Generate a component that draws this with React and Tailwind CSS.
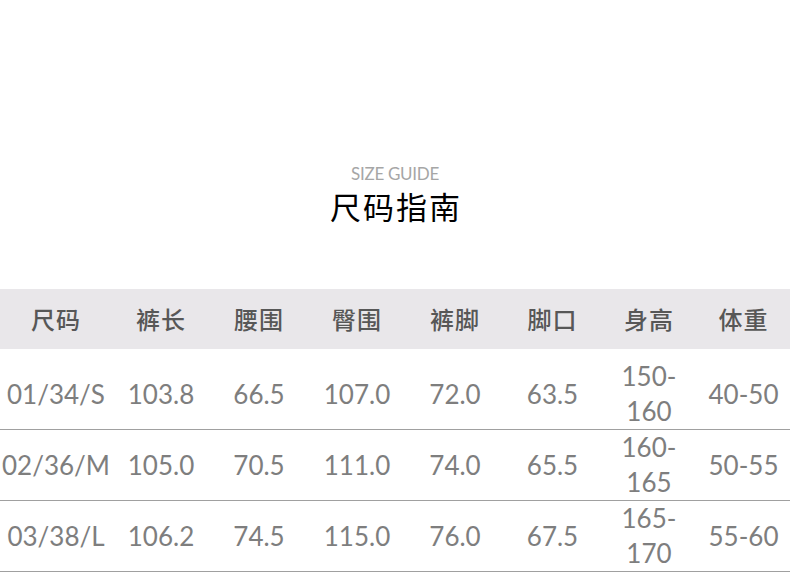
const COLS = ['尺码', '裤长', '腰围', '臀围', '裤脚', '脚口', '身高', '体重']

const ROWS = [
  ['01/34/S', '103.8', '66.5', '107.0', '72.0', '63.5', '150-160', '40-50'],
  ['02/36/M', '105.0', '70.5', '111.0', '74.0', '65.5', '160-165', '50-55'],
  ['03/38/L', '106.2', '74.5', '115.0', '76.0', '67.5', '165-170', '55-60'],
]

const GRID = 'grid grid-cols-[112px_98px_98px_98px_98px_97px_96px_93px]'

export default function App() {
  return (
    <div className="w-[790px] h-[572px] bg-white overflow-hidden font-['Lato','Noto_Sans_CJK_SC',sans-serif]">
      <div className="flex flex-col items-center pt-[162px]">
        <p className="text-[17px] leading-[23px] text-[#a6a6a6] tracking-[-0.3px]">SIZE GUIDE</p>
        <h1 className="text-[31px] leading-[42px] text-black font-['Noto_Sans_CJK_SC',sans-serif] tracking-[2px] pl-[2px]">尺码指南</h1>
      </div>

      <div className="mt-[62px]">
        <div className={`${GRID} h-[60px] bg-[#e9e7ea]`}>
          {COLS.map(c => (
            <div key={c} className="flex items-center justify-center text-[24px] text-[#575757] font-['Noto_Sans_CJK_SC',sans-serif] font-medium tracking-[1px]">
              {c}
            </div>
          ))}
        </div>

        {ROWS.map((row, i) => (
          <div
            key={row[0]}
            className={`${GRID} border-b border-[#a0a0a0] ${i === 0 ? 'h-[81px] pt-[10px]' : 'h-[71px]'}`}
          >
            {row.map((v, j) => (
              <div key={j} className="flex items-center justify-center text-center text-[26px] leading-[35px] text-[#7e7e7e]">
                {j === 6 ? (
                  <span>{v.split('-')[0]}-<br />{v.split('-')[1]}</span>
                ) : v}
              </div>
            ))}
          </div>
        ))}
      </div>
    </div>
  )
}
